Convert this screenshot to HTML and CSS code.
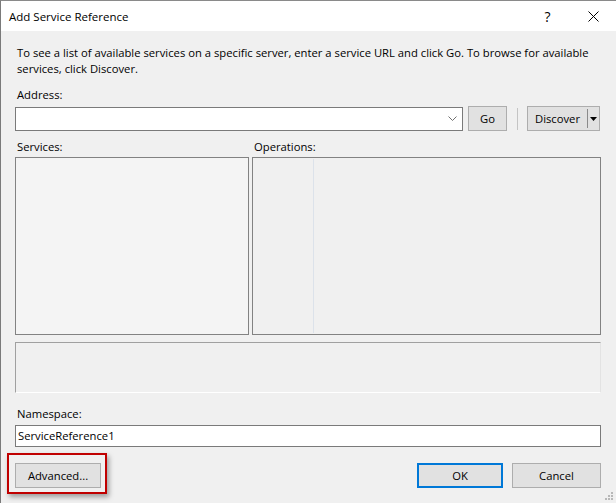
FILE: index.html
```html
<!DOCTYPE html>
<html>
<head>
  <title>Add Service Reference</title>
  <link rel="stylesheet" href="styles.css">
</head>
<body>
  <div class="window">
    <div class="titlebar">
      <span class="title">Add Service Reference</span>
      <span class="help">?</span>
      <span class="close">
        <svg width="11" height="11" viewBox="0 0 11 11"><path d="M0.5 0.5 L10.5 10.5 M10.5 0.5 L0.5 10.5" stroke="#000" stroke-width="1" fill="none"/></svg>
      </span>
    </div>

    <div class="content">
      <p class="intro">To see a list of available services on a specific server, enter a service URL and click Go. To browse for available services, click Discover.</p>

      <div class="label">Address:</div>
      <div class="address-row">
        <div class="combo">
          <svg class="chevron" width="9" height="6" viewBox="0 0 9 6"><path d="M0.5 0.5 L4.5 4.5 L8.5 0.5" stroke="#707070" stroke-width="1" fill="none"/></svg>
        </div>
        <button class="btn go">Go</button>
        <span class="sep"></span>
        <div class="btn split">
          <span class="split-main">Discover</span>
          <span class="split-arrow"><svg width="7" height="4" viewBox="0 0 7 4"><path d="M0 0 H7 L3.5 4 Z" fill="#000"/></svg></span>
        </div>
      </div>

      <div class="panes">
        <div class="pane services">
          <div class="label">Services:</div>
          <div class="list"></div>
        </div>
        <div class="pane operations">
          <div class="label">Operations:</div>
          <div class="list ops"><span class="col-line"></span></div>
        </div>
      </div>

      <div class="details"></div>

      <div class="label ns-label">Namespace:</div>
      <div class="textbox">ServiceReference1</div>

      <div class="footer">
        <div class="highlight">
          <button class="btn">Advanced...</button>
        </div>
        <div class="spacer"></div>
        <button class="btn ok">OK</button>
        <button class="btn cancel">Cancel</button>
      </div>
    </div>

    <svg class="grip" width="9" height="9" viewBox="0 0 9 9">
      <rect x="6" y="0" width="2" height="2" fill="#b8b8b8"/>
      <rect x="3" y="3" width="2" height="2" fill="#b8b8b8"/>
      <rect x="6" y="3" width="2" height="2" fill="#b8b8b8"/>
      <rect x="0" y="6" width="2" height="2" fill="#b8b8b8"/>
      <rect x="3" y="6" width="2" height="2" fill="#b8b8b8"/>
      <rect x="6" y="6" width="2" height="2" fill="#b8b8b8"/>
    </svg>
  </div>
</body>
</html>
```

FILE: styles.css
```css
body {
  margin: 0;
  padding: 0;
  font-family: 'Open Sans', 'Noto Sans', sans-serif;
  font-size: 11.25px;
  color: #000;
  background-color: #f0f0f0;
}

.window {
  position: relative;
  width: 616px;
  height: 503px;
  box-sizing: border-box;
  border-left: 1px solid #7a7a7a;
  border-top: 1px solid #8a8a8a;
  background-color: #f0f0f0;
  overflow: hidden;
}

.titlebar {
  display: flex;
  align-items: center;
  height: 30px;
  background-color: #fff;
}

.title {
  flex: 1;
  padding-left: 8px;
  font-size: 11.5px;
}

.help {
  width: 45px;
  text-align: center;
  font-size: 14px;
}

.close {
  width: 46px;
  display: flex;
  justify-content: center;
}

.content {
  padding: 0 15px 0 14px;
}

.intro {
  margin: 14px 0 0 0;
  padding-left: 2px;
  line-height: 16px;
}

.label {
  padding-left: 2px;
  line-height: 16px;
  height: 16px;
}

.intro + .label {
  margin-top: 10px;
}

.address-row {
  display: flex;
  align-items: flex-start;
  margin-top: 3px;
  height: 25px;
}

.combo {
  display: flex;
  align-items: center;
  justify-content: flex-end;
  width: 448px;
  height: 24px;
  margin-top: 1px;
  box-sizing: border-box;
  border: 1px solid #7a7a7a;
  background-color: #fff;
}

.chevron {
  margin-right: 5px;
}

.btn {
  display: flex;
  align-items: center;
  justify-content: center;
  height: 25px;
  box-sizing: border-box;
  margin: 0;
  padding: 0;
  border: 1px solid #adadad;
  background-color: #e1e1e1;
  font-family: inherit;
  font-size: 11.25px;
  color: #000;
}

.go {
  width: 39px;
  margin-left: 5px;
}

.sep {
  width: 1px;
  height: 22px;
  margin: 2px 0 0 10px;
  background-color: #c4c4c4;
}

.split {
  width: 73px;
  margin-left: 9px;
  justify-content: flex-start;
}

.split-main {
  width: 59px;
  text-align: center;
}

.split-arrow {
  display: flex;
  align-items: center;
  justify-content: center;
  flex: 1;
  height: 19px;
  border-left: 1px solid #8a8a8a;
}

.panes {
  display: flex;
  gap: 3px;
  margin-top: 8px;
}

.services {
  width: 234px;
}

.operations {
  flex: 1;
}

.list {
  height: 178px;
  margin-top: 2px;
  box-sizing: border-box;
  border: 1px solid #828282;
  background-color: #f4f4f4;
}

.ops {
  display: flex;
  padding: 1px 0;
  background-color: #f0f0f0;
}

.col-line {
  width: 1px;
  margin-left: 60px;
  background-color: #dce2ea;
}

.details {
  height: 51px;
  margin-top: 7px;
  box-sizing: border-box;
  border: 1px solid #a0a0a0;
  border-right-color: #e3e3e3;
  border-bottom-color: #fff;
}

.ns-label {
  margin-top: 13px;
}

.textbox {
  height: 22px;
  margin-top: 3px;
  box-sizing: border-box;
  border: 1px solid #7a7a7a;
  background-color: #fff;
  padding-left: 2px;
  line-height: 20px;
}

.footer {
  display: flex;
  margin-top: 16px;
}

.footer .btn {
  width: 86px;
}

.highlight {
  position: relative;
}

.highlight::after {
  content: '';
  position: absolute;
  left: -8px;
  top: -10px;
  right: -6px;
  bottom: -6px;
  border: 2px solid #c00000;
  box-shadow: 2px 3px 5px rgba(0, 0, 0, 0.35);
}

.spacer {
  flex: 1;
}

.footer .ok {
  border: 2px solid #0078d7;
}

.footer .cancel {
  width: 89px;
  margin-left: 9px;
}

.grip {
  position: absolute;
  right: 2px;
  bottom: 2px;
}
```
